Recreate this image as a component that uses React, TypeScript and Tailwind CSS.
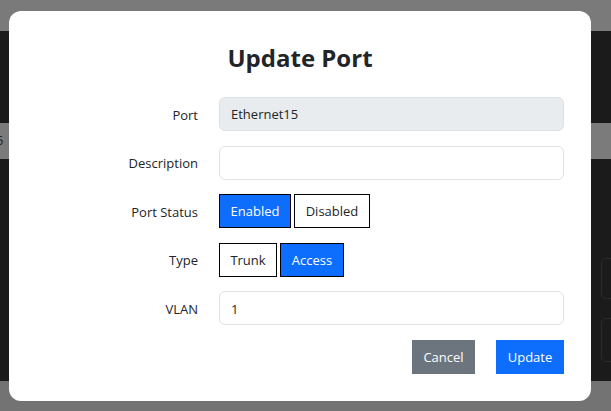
import React from "react";

const font = { fontFamily: '"Open Sans", "Noto Sans", "Liberation Sans", sans-serif' };

function Row({ label, children }: { label: string; children: React.ReactNode }) {
  return (
    <div className="flex items-center h-[34px]">
      <div className="w-[189px] text-right text-[13px] text-[#212529] leading-none pt-[2px]">{label}</div>
      <div className="flex-1 ml-[21px] flex h-full">{children}</div>
    </div>
  );
}

export default function App() {
  return (
    <div className="relative w-[611px] h-[411px] overflow-hidden" style={font}>
      <div className="flex flex-col w-full h-full">
        <div className="h-[31px] bg-[#7a7a7a]" />
        <div className="h-[92px] bg-[#1b1b1b]" />
        <div className="h-[36px] bg-[#7b7b7b] flex items-center text-[13px] text-[#222]">
          <span className="-ml-[4px]">5</span>
        </div>
        <div className="h-[222px] bg-[#1b1b1b] relative">
          <div className="absolute left-[601px] top-[99px] w-[30px] h-[41px] rounded-[5px] border border-[#2c2c2c]" />
          <div className="absolute left-[601px] top-[159px] w-[30px] h-[44px] rounded-[5px] border border-[#2c2c2c]" />
        </div>
        <div className="flex-1 bg-[#737373]" />
      </div>

      <div className="absolute left-[9px] top-[11px] w-[582px] h-[390px] bg-white rounded-[12px] pr-[27px]">
        <h3 className="text-center font-bold text-[24px] text-[#212529] leading-none pt-[35px] pl-[27px] h-[59px]">Update Port</h3>
        <div className="flex flex-col gap-[14.6px] mt-[27px]">
          <Row label="Port">
            <div className="flex-1 h-full rounded-[6px] border border-[#dee2e6] bg-[#e9ecef] flex items-center px-[11px] pt-[2px] text-[13px] text-[#212529]">
              Ethernet15
            </div>
          </Row>
          <Row label="Description">
            <div className="flex-1 h-full rounded-[6px] border border-[#dee2e6] bg-white" />
          </Row>
          <Row label="Port Status">
            <div className="flex gap-[3px] h-full">
              <button className="w-[72px] h-full bg-[#0d6efd] border border-black text-white text-[13px] pt-[2px]">Enabled</button>
              <button className="w-[76px] h-full bg-white border border-black text-[#212529] text-[13px] pt-[2px]">Disabled</button>
            </div>
          </Row>
          <Row label="Type">
            <div className="flex gap-[3px] h-full">
              <button className="w-[58px] h-full bg-white border border-black text-[#212529] text-[13px] pt-[2px]">Trunk</button>
              <button className="w-[64px] h-full bg-[#0d6efd] border border-black text-white text-[13px] pt-[2px]">Access</button>
            </div>
          </Row>
          <Row label="VLAN">
            <div className="flex-1 h-full rounded-[6px] border border-[#dee2e6] bg-white flex items-center px-[11px] pt-[2px] text-[13px] text-[#212529]">
              1
            </div>
          </Row>
          <div className="flex justify-end gap-[21px] h-[34px]">
            <button className="w-[63px] h-full bg-[#6c757d] text-white text-[13px] pt-[2px]">Cancel</button>
            <button className="w-[68px] h-full bg-[#0d6efd] text-white text-[13px] pt-[2px]">Update</button>
          </div>
        </div>
      </div>
    </div>
  );
}
